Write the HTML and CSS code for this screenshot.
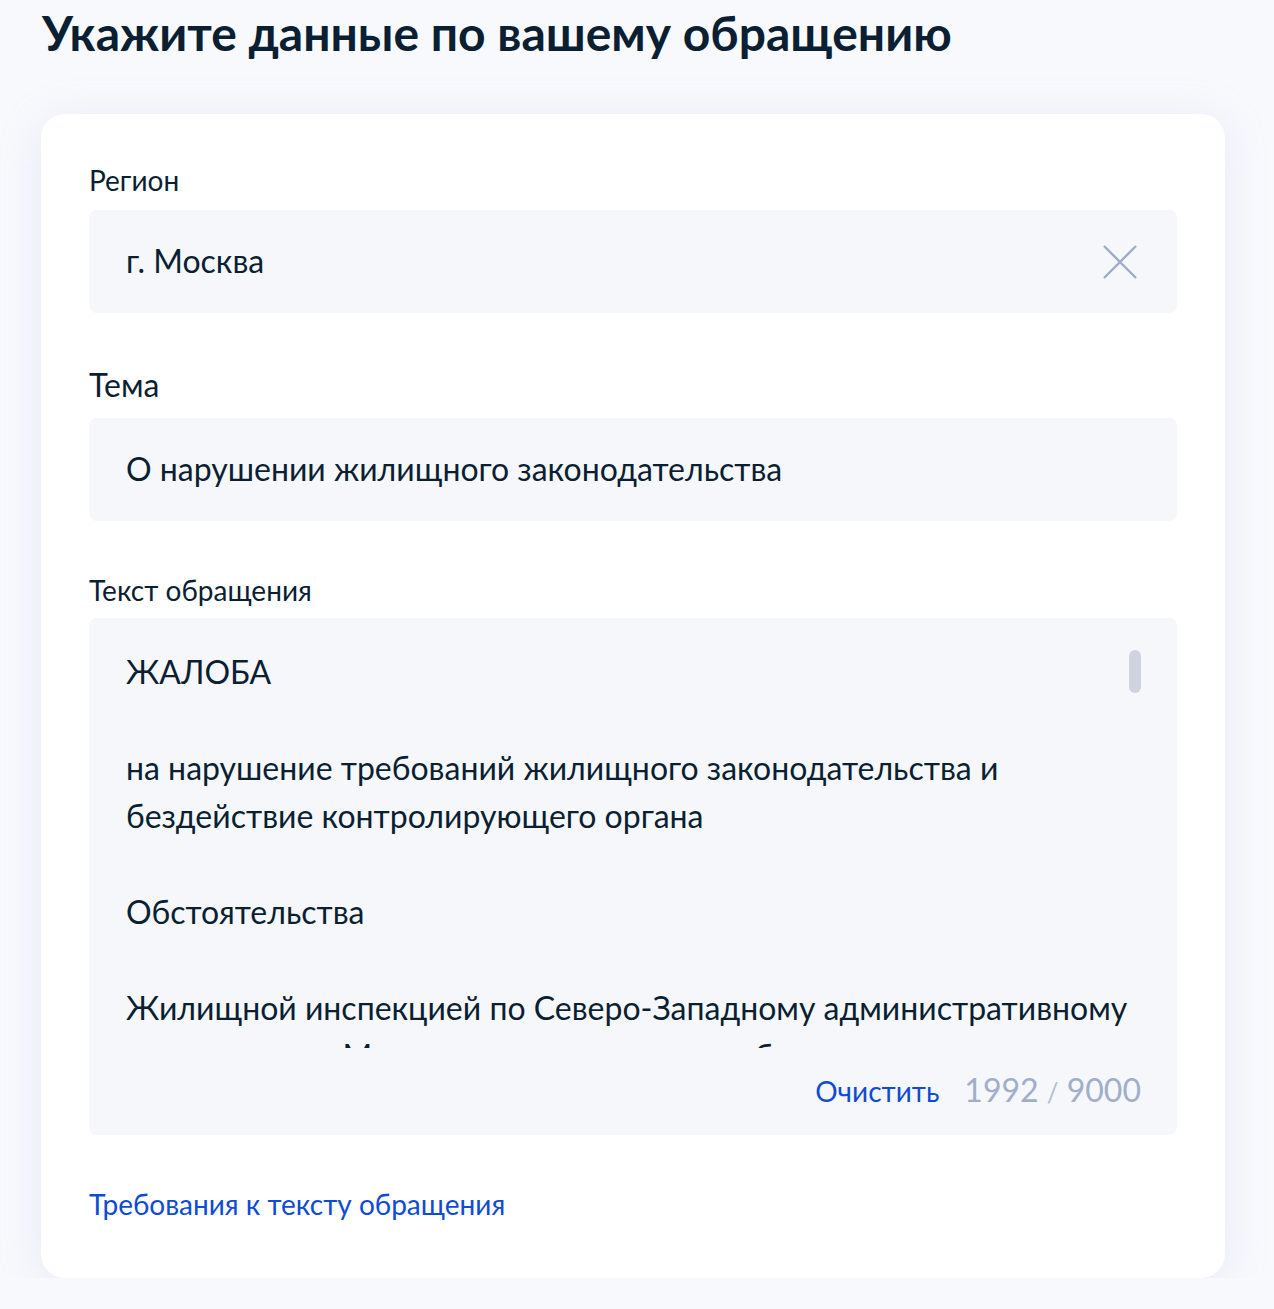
FILE: index.html
```html
<!DOCTYPE html>
<html lang="ru">
<head>
<meta charset="utf-8">
<title>Обращение</title>
<link rel="stylesheet" href="styles.css">
</head>
<body>
<main class="page">
  <h1 class="title">Укажите данные по вашему обращению</h1>
  <section class="card">
    <div class="field">
      <div class="label label-region">Регион</div>
      <div class="input">
        <span class="input-value">г. Москва</span>
        <svg class="clear-icon" width="34" height="34" viewBox="0 0 34 34" aria-hidden="true">
          <path d="M1 1 L33 33 M33 1 L1 33" stroke="#9dabcc" stroke-width="2.4" fill="none"/>
        </svg>
      </div>
    </div>
    <div class="field">
      <div class="label label-theme">Тема</div>
      <div class="input">
        <span class="input-value">О нарушении жилищного законодательства</span>
      </div>
    </div>
    <div class="field">
      <div class="label label-text">Текст обращения</div>
      <div class="textarea">
        <div class="ta-text">
          <p>ЖАЛОБА</p>
          <p>на нарушение требований жилищного законодательства и бездействие контролирующего органа</p>
          <p>Обстоятельства</p>
          <p>Жилищной инспекцией по Северо-Западному административному округу города Москвы не приняты меры обеспечения надлежащего содержания общего имущества многоквартирного дома.</p>
        </div>
        <div class="scroll-thumb"></div>
        <div class="ta-footer">
          <span class="clear-link">Очистить</span>
          <span class="counter">1992&nbsp;<span class="slash">/</span>&nbsp;9000</span>
        </div>
      </div>
    </div>
    <a class="req-link" href="#">Требования к тексту обращения</a>
  </section>
</main>
</body>
</html>
```

FILE: styles.css
```css
* { box-sizing: border-box; }

html, body {
  margin: 0;
  padding: 0;
  background: #f8f9fd;
}

body {
  font-family: Lato, "Noto Sans", "Liberation Sans", sans-serif;
  color: #0b1f33;
}

.page {
  padding: 0 49px 0 41px;
  width: 1274px;
}

.title {
  margin: 0;
  padding: 3px 0 0 1px;
  font-size: 48px;
  line-height: 60px;
  font-weight: 700;
  height: 114px;
}

.card {
  background: #ffffff;
  border-radius: 24px;
  box-shadow: 0 6px 40px rgba(180, 195, 230, 0.25);
  padding: 46px 48px 52px 48px;
  display: flex;
  flex-direction: column;
}

.field {
  display: flex;
  flex-direction: column;
}

.label {
  line-height: 40px;
}

.label-region { font-size: 28px; margin-bottom: 10px; }
.label-theme { font-size: 32px; margin-top: 52px; margin-bottom: 13px; }
.label-text { font-size: 28px; margin-top: 49px; margin-bottom: 8px; }

.input {
  background: #f5f7fa;
  border-radius: 8px;
  height: 103px;
  display: flex;
  align-items: center;
  justify-content: space-between;
  padding: 0 40px 0 37px;
}

.input-value {
  font-size: 32px;
  line-height: 40px;
  margin-top: -2px;
}

.clear-icon {
  display: block;
}

.textarea {
  position: relative;
  background: #f5f7fa;
  border-radius: 8px;
  padding: 30px 36px 20px 37px;
  display: flex;
  flex-direction: column;
}

.ta-text {
  height: 400px;
  overflow: hidden;
  font-size: 32px;
  line-height: 48px;
}

.ta-text p {
  margin: 0 0 48px 0;
}

.scroll-thumb {
  position: absolute;
  top: 32px;
  right: 36px;
  width: 12px;
  height: 43px;
  border-radius: 6px;
  background: #cdd3df;
}

.ta-footer {
  display: flex;
  justify-content: flex-end;
  align-items: baseline;
  gap: 25px;
  margin-top: 19px;
  line-height: 46px;
}

.clear-link {
  color: #0d4cd3;
  font-size: 28px;
}

.counter {
  color: #a0aecb;
  font-size: 32px;
}

.counter .slash {
  font-size: 26px;
  color: #b2bdd6;
}

.req-link {
  margin-top: 47px;
  color: #0d4cd3;
  font-size: 28px;
  line-height: 44px;
  text-decoration: none;
  align-self: flex-start;
}
```
